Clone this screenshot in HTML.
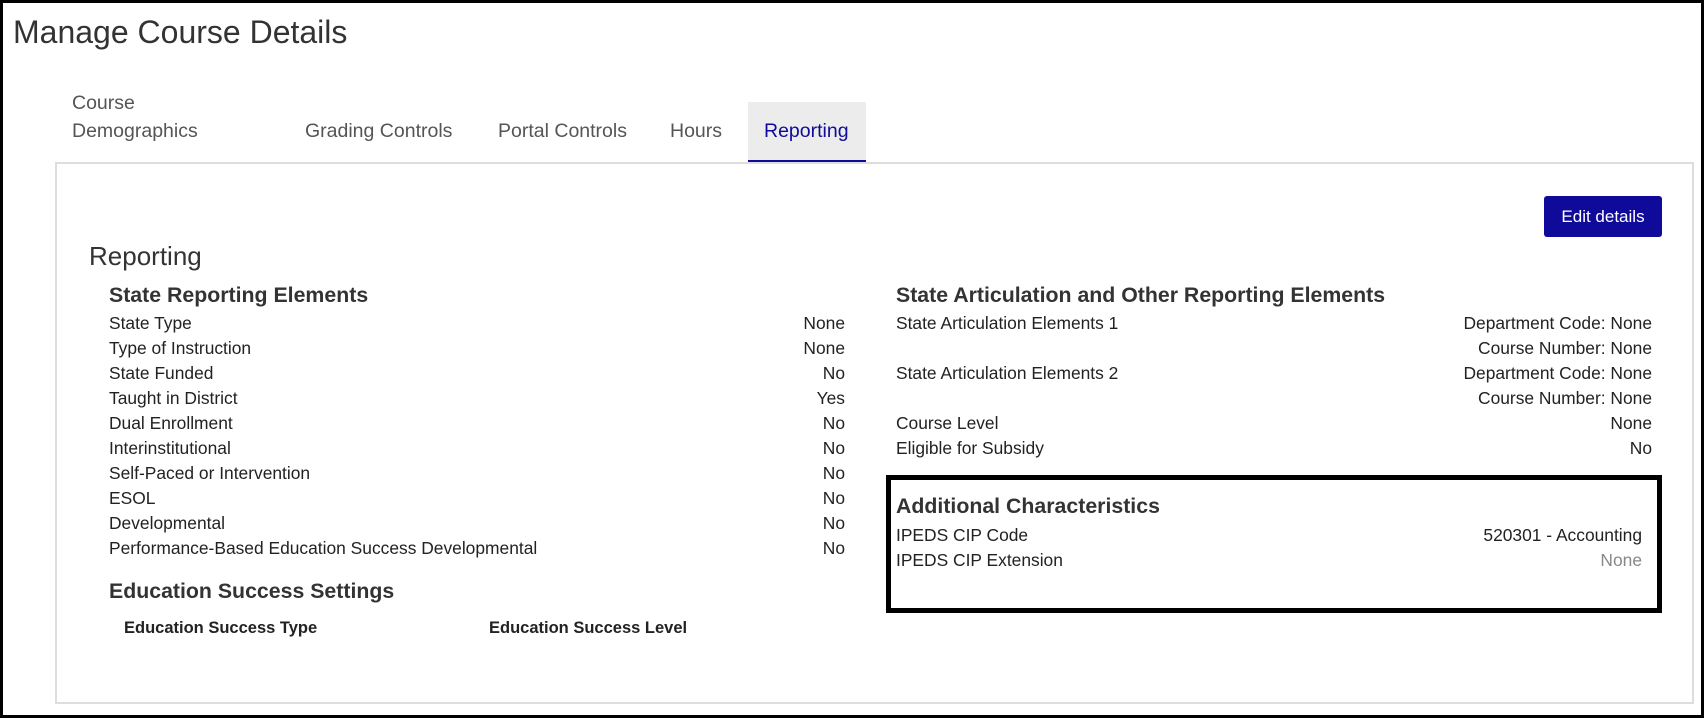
<!DOCTYPE html>
<html><head><meta charset="utf-8"><style>
*{margin:0;padding:0;box-sizing:border-box}
body{width:1704px;height:718px;overflow:hidden;background:#fff;font-family:"Liberation Sans",sans-serif;color:#222;position:relative}
.frame{position:absolute;left:0;top:0;width:1704px;height:718px;border:3px solid #000}
.a{position:absolute;white-space:nowrap}
.t{font-size:32px;color:#333;left:13px;top:14px}
.tab{font-size:19.5px;color:#555}
.act{position:absolute;left:748px;top:102px;width:118px;height:61px;background:#ececec;border-bottom:3px solid #0f0a99}
.panel{position:absolute;left:55px;top:162px;width:1639px;height:542px;border:2px solid #ddd}
.btn{position:absolute;left:1544px;top:196px;width:118px;height:41px;background:#0f0a99;border-radius:3px;color:#fff;font-size:17px;text-align:center;line-height:41px}
.h2{font-size:26px;color:#333}
.h3{font-size:21.3px;font-weight:bold;color:#333}
.r{font-size:17.4px;color:#222}
.rt{text-align:right}
.box{position:absolute;left:886px;top:475px;width:776px;height:138px;border:5px solid #000}
.b{font-size:16.5px;font-weight:bold}
</style></head><body>
<div class="frame"></div>
<div class="a t">Manage Course Details</div>
<div class="act"></div>
<div class="a tab" style="left:72px;top:92px">Course</div>
<div class="a tab" style="left:72px;top:120px">Demographics</div>
<div class="a tab" style="left:305px;top:120px">Grading Controls</div>
<div class="a tab" style="left:498px;top:120px">Portal Controls</div>
<div class="a tab" style="left:670px;top:120px">Hours</div>
<div class="a tab" style="left:764px;top:120px;color:#0f0a99">Reporting</div>
<div class="panel"></div>
<div class="btn">Edit details</div>
<div class="a h2" style="left:89px;top:241px">Reporting</div>
<div class="a h3" style="left:109px;top:283px">State Reporting Elements</div>
<div class="a h3" style="left:896px;top:283px">State Articulation and Other Reporting Elements</div>

<div class="a r" style="left:109px;top:311px;line-height:25px">State Type<br>Type of Instruction<br>State Funded<br>Taught in District<br>Dual Enrollment<br>Interinstitutional<br>Self-Paced or Intervention<br>ESOL<br>Developmental<br>Performance-Based Education Success Developmental</div>
<div class="a r rt" style="right:859px;top:311px;line-height:25px">None<br>None<br>No<br>Yes<br>No<br>No<br>No<br>No<br>No<br>No</div>

<div class="a r" style="left:896px;top:311px;line-height:25px">State Articulation Elements 1<br><br>State Articulation Elements 2<br><br>Course Level<br>Eligible for Subsidy</div>
<div class="a r rt" style="right:52px;top:311px;line-height:25px">Department Code: None<br>Course Number: None<br>Department Code: None<br>Course Number: None<br>None<br>No</div>

<div class="box"></div>
<div class="a h3" style="left:896px;top:494px">Additional Characteristics</div>
<div class="a r" style="left:896px;top:523px;line-height:25px">IPEDS CIP Code<br>IPEDS CIP Extension</div>
<div class="a r rt" style="right:62px;top:523px;line-height:25px">520301 - Accounting<br><span style="color:#888">None</span></div>

<div class="a h3" style="left:109px;top:579px">Education Success Settings</div>
<div class="a b" style="left:124px;top:619px">Education Success Type</div>
<div class="a b" style="left:489px;top:619px">Education Success Level</div>
</body></html>
